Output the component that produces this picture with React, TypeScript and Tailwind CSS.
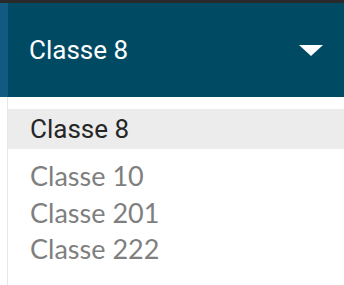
import React from "react";

export default function App() {
  const items = ["Classe 10", "Classe 201", "Classe 222"];
  return (
    <div className="w-[344px] h-[285px] bg-white overflow-hidden flex flex-col">
      <div className="h-[3px] bg-[#2a2a2a]" />
      <div className="h-[94px] flex">
        <div className="w-[8px] bg-[#135a82]" />
        <div className="flex-1 bg-[#004a63] flex items-center justify-between pl-[21px] pr-[21px]">
          <span className="text-white text-[26px] leading-none font-['Roboto',sans-serif]">
            Classe 8
          </span>
          <svg width="24" height="11" viewBox="0 0 24 11">
            <polygon points="0,0 24,0 12,11" fill="#ffffff" />
          </svg>
        </div>
      </div>
      <div className="flex-1 flex">
        <div className="w-[7px] bg-white" />
        <div className="flex-1 border-l border-[#e6e6e6] pt-[12px]">
          <div className="h-[40px] leading-[40px] bg-[#ececec] pl-[22px] text-[26px] text-[#262626] font-['Roboto',sans-serif]">
            Classe 8
          </div>
          <div className="mt-[9px] flex flex-col">
            {items.map((t) => (
              <div
                key={t}
                className="pl-[22px] text-[27px] leading-[36.5px] text-[#7f7f7f] font-['Lato',sans-serif]"
              >
                {t}
              </div>
            ))}
          </div>
        </div>
      </div>
    </div>
  );
}
